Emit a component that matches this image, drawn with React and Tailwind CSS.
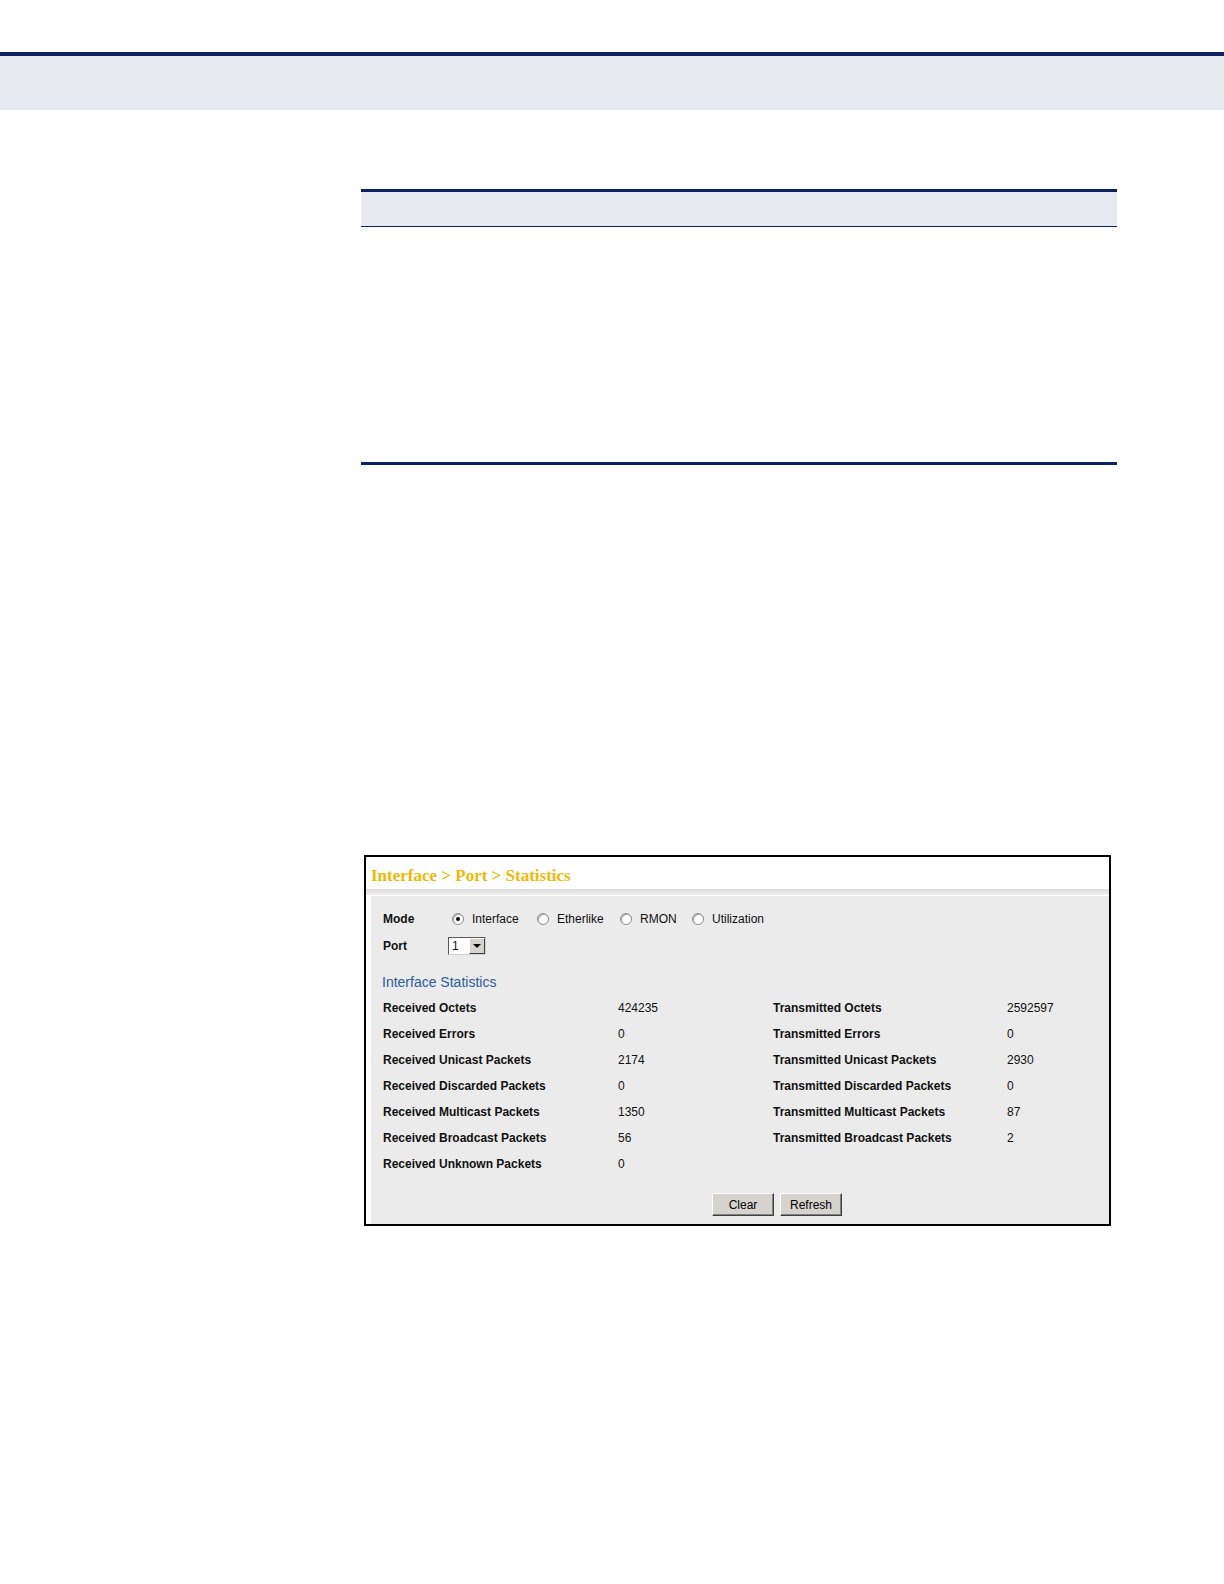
import React from "react";

const rows = [
  ["Received Octets", "424235", "Transmitted Octets", "2592597"],
  ["Received Errors", "0", "Transmitted Errors", "0"],
  ["Received Unicast Packets", "2174", "Transmitted Unicast Packets", "2930"],
  ["Received Discarded Packets", "0", "Transmitted Discarded Packets", "0"],
  ["Received Multicast Packets", "1350", "Transmitted Multicast Packets", "87"],
  ["Received Broadcast Packets", "56", "Transmitted Broadcast Packets", "2"],
  ["Received Unknown Packets", "0", "", ""],
];

const Radio = ({ checked, label }) => (
  <div className="flex items-center">
    <span className="relative flex h-[12px] w-[12px] items-center justify-center rounded-full border border-[#8c8c8c] bg-white shadow-[inset_1px_1px_1px_rgba(0,0,0,0.35)]">
      {checked && <span className="h-[4px] w-[4px] rounded-full bg-black" />}
    </span>
    <span className="ml-[8px]">{label}</span>
  </div>
);

const Btn = ({ children }) => (
  <button className="h-[23px] w-[62px] border border-t-white border-l-white border-b-[#404040] border-r-[#404040] bg-[#d6d3ce] text-[12px] text-black shadow-[inset_-1px_-1px_0_#808080]">
    {children}
  </button>
);

const App = () => {
  return (
    <div className="relative h-[1584px] w-[1224px] overflow-hidden bg-white font-['Liberation_Sans',Arial,sans-serif] text-[#111]">
      <div className="mt-[52px] h-[4px] bg-[#0b2461]" />
      <div className="h-[54px] bg-[#e6e9f0]" />

      <div className="ml-[361px] mt-[79px] w-[756px]">
        <div className="h-[3px] bg-[#0b2461]" />
        <div className="h-[35px] border-b border-[#0b2461] bg-[#e6e9f0]" />
        <div className="h-[235px]" />
        <div className="h-[3px] bg-[#0b2461]" />
      </div>

      <div className="ml-[364px] mt-[390px] flex h-[371px] w-[747px] flex-col border-2 border-black bg-white">
        <div className="flex h-[32px] items-center pl-[5px] pt-[6px] font-['Liberation_Serif',serif] text-[17px] font-bold text-[#f2b705]">
          Interface &gt; Port &gt; Statistics
        </div>
        <div className="h-[6px] bg-gradient-to-b from-[#dcdcdc] to-[#f0f0f0]" />
        <div className="flex flex-1 pl-[5px] pt-[1px]">
          <div className="flex flex-1 flex-col bg-[#ebebeb] pl-[12px] pt-[14px] text-[12px]">
            <div className="flex h-[18px] items-center">
              <span className="w-[69px] font-bold">Mode</span>
              <div className="w-[85px]"><Radio checked label="Interface" /></div>
              <div className="w-[83px]"><Radio label="Etherlike" /></div>
              <div className="w-[72px]"><Radio label="RMON" /></div>
              <Radio label="Utilization" />
            </div>
            <div className="mt-[9px] flex h-[18px] items-center">
              <span className="w-[65px] font-bold">Port</span>
              <div className="flex h-[18px] w-[38px] border border-t-[#5a5a5a] border-l-[#5a5a5a] border-b-[#d0d0d0] border-r-[#d0d0d0] bg-white">
                <span className="flex-1 pl-[3px] leading-[16px]">1</span>
                <span className="flex w-[16px] items-center justify-center border border-t-white border-l-white border-b-[#404040] border-r-[#404040] bg-[#d6d3ce]">
                  <span className="h-0 w-0 border-x-[4px] border-t-[4px] border-x-transparent border-t-black" />
                </span>
              </div>
            </div>
            <div className="-ml-[1px] mt-[17px] h-[20px] text-[14px] leading-[20px] text-[#2e5c9e]">
              Interface Statistics
            </div>
            <div className="mt-[3px] flex flex-col">
              {rows.map((r, i) => (
                <div key={i} className="flex h-[26px] items-center">
                  <span className="w-[235px] font-bold">{r[0]}</span>
                  <span className="w-[155px]">{r[1]}</span>
                  <span className="w-[234px] font-bold">{r[2]}</span>
                  <span>{r[3]}</span>
                </div>
              ))}
            </div>
            <div className="ml-[329px] mt-[16px] flex gap-[6px]">
              <Btn>Clear</Btn>
              <Btn>Refresh</Btn>
            </div>
          </div>
        </div>
      </div>
    </div>
  );
};

export default App;
